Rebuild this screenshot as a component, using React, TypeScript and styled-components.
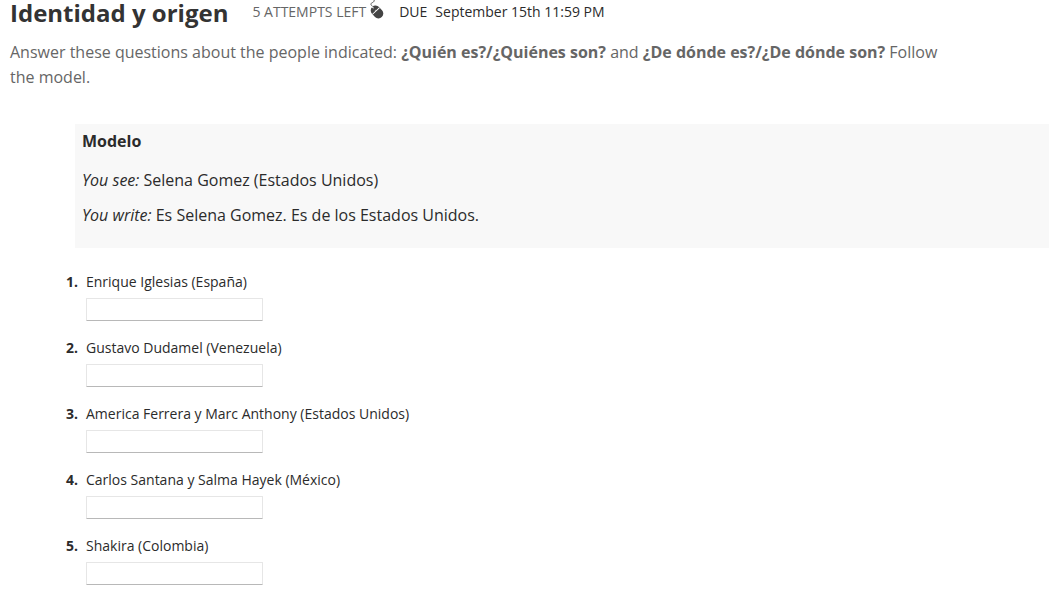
import React from "react";
import styled, { createGlobalStyle } from "styled-components";

const GlobalStyle = createGlobalStyle`
  * { box-sizing: border-box; }
  body { margin: 0; background: #fff; color: #2b2b2b; font-family: "Open Sans", sans-serif; }
`;

const Page = styled.main`
  display: flow-root;
`;

const Header = styled.header`
  display: flex;
  align-items: flex-start;
  padding-left: 10px;
  font-size: 14px;
  line-height: 24px;
  white-space: nowrap;
`;

const Title = styled.h1`
  margin: 0 24px 0 0;
  font-size: 24px;
  line-height: 26px;
  font-weight: 700;
  color: #333;
`;

const Attempts = styled.span`
  color: #666;
`;

const MouseIcon = styled.svg`
  flex: none;
  width: 16px;
  height: 20px;
  margin: 0 14px 0 3px;
`;

const DueLabel = styled.span`
  margin-right: 8px;
`;

const Direction = styled.p`
  margin: 14px 0 0 10px;
  max-width: 944px;
  font-size: 16px;
  line-height: 25px;
  color: #666;
`;

const Model = styled.section`
  margin: 34px 0 0 75px;
  padding: 5px 7px 10px;
  background: #f8f8f8;
  font-size: 16px;
  line-height: 25px;
`;

const ModelTitle = styled.h2`
  margin: 0 0 14px;
  font-size: 16px;
  line-height: 25px;
`;

const ModelLine = styled.p`
  margin: 0 0 10px;
`;

const Questions = styled.ol`
  display: grid;
  gap: 17px;
  list-style: none;
  margin: 24px 0 0;
  padding: 0 0 0 66px;
  font-size: 14px;
  line-height: 20px;
`;

const Question = styled.li`
  display: grid;
  grid-template-columns: 20px 1fr;
`;

const Answer = styled.input`
  grid-column: 2;
  width: 177px;
  height: 23px;
  margin-top: 6px;
  padding: 2px 4px;
  border: 1px solid #e6e6e6;
  border-bottom-color: #b8b8b8;
  border-radius: 1px;
  background: #fff;
  font: inherit;
`;

const people = [
  "Enrique Iglesias (España)",
  "Gustavo Dudamel (Venezuela)",
  "America Ferrera y Marc Anthony (Estados Unidos)",
  "Carlos Santana y Salma Hayek (México)",
  "Shakira (Colombia)",
];

export default function App() {
  return (
    <Page>
      <GlobalStyle />
      <Header>
        <Title>Identidad y origen</Title>
        <Attempts>5 ATTEMPTS LEFT</Attempts>
        <MouseIcon viewBox="0 0 16 20" aria-hidden="true">
          <path d="M3.6 6.4C1.2 4.6 1.6 3.4 3.4 2.6C4.8 2 5.2 1.2 5.2 0" fill="none" stroke="#555" strokeWidth="1" />
          <g transform="rotate(-43 8 12)">
            <rect x="3.2" y="5" width="9.6" height="14" rx="4.8" fill="#444" />
            <path d="M3.2 10.6H12.8M8 5V10.6" stroke="#fff" strokeWidth="1" />
            <rect x="7" y="6.8" width="2" height="3" rx="1" fill="#444" />
          </g>
        </MouseIcon>
        <DueLabel>DUE</DueLabel>
        <time>September 15th 11:59 PM</time>
      </Header>
      <Direction>
        Answer these questions about the people indicated: <b>¿Quién es?/¿Quiénes son?</b> and{" "}
        <b>¿De dónde es?/¿De dónde son?</b> Follow the model.
      </Direction>
      <Model>
        <ModelTitle>Modelo</ModelTitle>
        <ModelLine><i>You see:</i> Selena Gomez (Estados Unidos)</ModelLine>
        <ModelLine><i>You write:</i> Es Selena Gomez. Es de los Estados Unidos.</ModelLine>
      </Model>
      <Questions>
        {people.map((name, i) => (
          <Question key={name}>
            <b>{i + 1}.</b>
            <label htmlFor={`answer-${i + 1}`}>{name}</label>
            <Answer id={`answer-${i + 1}`} type="text" />
          </Question>
        ))}
      </Questions>
    </Page>
  );
}
